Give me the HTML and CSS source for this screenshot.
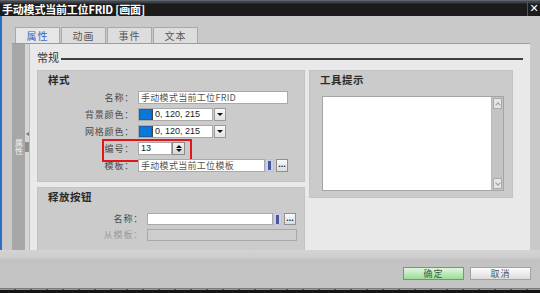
FILE: index.html
```html
<!DOCTYPE html>
<html lang="zh">
<head>
<meta charset="utf-8">
<link rel="stylesheet" href="styles.css">
</head>
<body>
<div class="window">
  <div class="titlebar">
    <span class="title">手动模式当前工位FRID [画面]</span>
    <span class="close">✕</span>
  </div>
  <div class="main">
    <div class="tabs">
      <div class="tab active">属性</div>
      <div class="tab">动画</div>
      <div class="tab">事件</div>
      <div class="tab">文本</div>
    </div>
    <div class="tabbody">
      <div class="sidebar"><span class="vtext">属性</span></div>
      <div class="sidegrip"><span class="grip-arrow"></span><span class="grip-block"></span></div>
      <div class="content">
        <div class="section-head"><span class="section-title">常规</span><span class="rule"></span></div>
        <div class="cols">
          <div class="leftcol">
            <div class="panel style-panel">
              <div class="panel-title">样式</div>
              <div class="form">
                <div class="label">名称：</div>
                <div class="field"><div class="input w150">手动模式当前工位FRID</div></div>

                <div class="label">背景颜色：</div>
                <div class="field">
                  <div class="input w74 color"><span class="swatch"></span><span class="num">0, 120, 215</span></div>
                  <div class="dropbtn"><span class="tri-down"></span></div>
                </div>

                <div class="label">网格颜色：</div>
                <div class="field">
                  <div class="input w74 color"><span class="swatch"></span><span class="num">0, 120, 215</span></div>
                  <div class="dropbtn"><span class="tri-down"></span></div>
                </div>

                <div class="label">编号：</div>
                <div class="field highlight">
                  <div class="input w34"><span class="num">13</span></div>
                  <div class="spin"><span class="tri-up small"></span><span class="tri-down small"></span></div>
                </div>

                <div class="label">模板：</div>
                <div class="field">
                  <div class="input w127">手动模式当前工位模板</div>
                  <div class="listicon"><span></span></div>
                  <div class="dots">...</div>
                </div>
              </div>
            </div>
            <div class="panel release-panel">
              <div class="panel-title">释放按钮</div>
              <div class="form form-release">
                <div class="label">名称：</div>
                <div class="field">
                  <div class="input w126"></div>
                  <div class="listicon"><span></span></div>
                  <div class="dots">...</div>
                </div>
                <div class="label disabled">从模板：</div>
                <div class="field"><div class="input w150 off"></div></div>
              </div>
            </div>
          </div>
          <div class="panel tip-panel">
            <div class="panel-title">工具提示</div>
            <div class="textarea">
              <div class="scrollbar">
                <div class="sbtn"><span class="chev up"></span></div>
                <div class="strack"></div>
                <div class="sbtn"><span class="chev down"></span></div>
              </div>
            </div>
          </div>
        </div>
      </div>
    </div>
  </div>
  <div class="buttonbar">
    <div class="btn ok">确定</div>
    <div class="btn cancel">取消</div>
  </div>
  <div class="bottomstrip"></div>
</div>
</body>
</html>
```

FILE: styles.css
```css
* { box-sizing: border-box; margin: 0; padding: 0; }
html, body { width: 540px; height: 293px; overflow: hidden; }
body {
  font-family: "Noto Sans CJK SC", "Noto Sans", sans-serif;
  font-size: 9px;
  color: #333;
  background: #c8c8c8;
}
.window { display: flex; flex-direction: column; height: 293px; }

.titlebar {
  height: 16px; flex: none;
  background: linear-gradient(#6d7f96 0, #4a4a4a 1px, #3a3a3a 3px, #1c1c1c 4px, #1b1b1b 100%);
  display: flex; align-items: flex-start; justify-content: space-between;
  color: #fff;
}
.title { font-size: 11px; font-weight: bold; line-height: 12px; padding: 3px 0 0 2px; letter-spacing: -0.2px; }
.close {
  width: 13px; height: 16px; border-left: 1px solid #555;
  font-size: 11px; font-weight: bold; line-height: 12px; padding-top: 3px; text-align: center;
  font-family: "DejaVu Sans", sans-serif;
}

.main {
  height: 234px; flex: none;
  border-left: 2px solid #2a6fc8;
  background: #c9c9c9;
  padding: 11px 10px 0 10px;
  display: flex; flex-direction: column;
}
.tabs { display: flex; gap: 1px; height: 16px; padding-left: 3px; flex: none; }
.tab {
  width: 45px; height: 16px;
  border: 1px solid #a9a9a9; border-bottom: none;
  background: #dddddd;
  font-size: 10px; line-height: 15px; text-align: center; color: #555; letter-spacing: 1px;
}
.tab.active { background: #e6e6e6; color: #3b63c9; }

.tabbody {
  flex: 1; display: flex;
  border-top: 1px solid #9c9c9c;
  background: #e9e9e9;
  overflow: hidden;
}
.sidebar {
  width: 13px; flex: none; background: #a7a7a7;
  display: flex; align-items: center; justify-content: center;
}
.vtext { writing-mode: vertical-rl; color: #f2f2f2; font-size: 8px; line-height: 10px; }
.sidegrip {
  width: 5px; flex: none; background: #d6d6d6; border-right: 1px solid #bdbdbd;
  display: flex; flex-direction: column; align-items: center; justify-content: center; gap: 6px;
}
.grip-arrow { width: 0; height: 0; border-top: 2px solid transparent; border-bottom: 2px solid transparent; border-right: 3px solid #777; margin-top: -10px; }
.grip-block { width: 4px; height: 10px; background: #8e8e8e; }

.content { flex: 1; padding: 7px 17px 0 7px; display: flex; flex-direction: column; overflow: hidden; }
.section-head { display: flex; align-items: center; height: 13px; flex: none; }
.section-title { font-size: 11px; line-height: 13px; color: #333; }
.rule { flex: 1; height: 2px; background: #3e3e3e; margin: 2px -10px 0 2px; }

.cols { display: flex; gap: 4px; margin-top: 6px; flex: none; }
.leftcol { width: 268px; display: flex; flex-direction: column; gap: 5px; }
.panel { background: #cbcbcb; border: 1px solid #c3c3c3; }
.panel-title { font-size: 10.5px; font-weight: bold; line-height: 12px; color: #2a2a2a; padding-left: 10px; letter-spacing: 0.5px; }

.style-panel { height: 112px; padding-top: 3px; }
.form {
  display: grid; grid-template-columns: 96px auto; column-gap: 4px; row-gap: 4px;
  grid-auto-rows: 13px; margin-top: 5px; justify-content: start;
}
.label { text-align: right; font-size: 9px; line-height: 13px; color: #4a4a4a; letter-spacing: 0.8px; }
.label.disabled { color: #9a9a9a; }
.field { display: flex; align-items: stretch; gap: 0; position: relative; }
.input {
  height: 13px; background: #fff; border: 1px solid #a9a9a9;
  font-size: 9px; line-height: 11px; padding-left: 2px; color: #555;
  white-space: nowrap; overflow: hidden; letter-spacing: 0.3px;
  display: flex; align-items: center;
}
.input.off { background: #cdcdcd; border-color: #a8a8a8; }
.w150 { width: 150px; }
.w127 { width: 127px; }
.w126 { width: 126px; }
.w74 { width: 75px; }
.w34 { width: 34px; }
.num { font-family: "Liberation Sans", "Noto Sans", sans-serif; font-size: 9px; color: #222; letter-spacing: 0; }
.color { padding-left: 0; }
.swatch { width: 14px; height: 11px; background: #0a78d8; border-right: 1px solid #444; margin-right: 2px; flex: none; box-shadow: inset 0 0 0 1px #1b5fae; }
.dropbtn {
  width: 12px; height: 13px; margin-left: 1px;
  background: linear-gradient(#fafafa, #e2e2e2); border: 1px solid #9a9a9a;
  display: flex; align-items: center; justify-content: center;
}
.tri-down { width: 0; height: 0; border-left: 3px solid transparent; border-right: 3px solid transparent; border-top: 3px solid #111; }
.tri-up { width: 0; height: 0; border-left: 3px solid transparent; border-right: 3px solid transparent; border-bottom: 3px solid #111; }
.spin {
  width: 13px; height: 13px; background: linear-gradient(#f0f0f0, #d6d6d6); border: 1px solid #8c8c8c;
  display: flex; flex-direction: column; align-items: center; justify-content: center; gap: 1px;
}
.highlight::after {
  content: ""; position: absolute; left: -36px; top: -3px; width: 86px; height: 19px;
  border: 2px solid #e3141b;
}
.listicon {
  width: 9px; height: 13px; background: #c9cfee; border: 1px solid #b9c0e0;
  display: flex; justify-content: center; align-items: center;
}
.listicon span { width: 3px; height: 9px; background: #4d5797; }
.dots {
  width: 12px; height: 13px; margin-left: 2px;
  background: linear-gradient(#fafafa, #dcdcdc); border: 1px solid #8f8f8f;
  font-family: "Liberation Sans", sans-serif; font-weight: bold; font-size: 9px; line-height: 8px; text-align: center; color: #222;
}

.release-panel { height: 80px; padding-top: 3px; flex: none; }
.form-release { grid-template-columns: 105px auto; margin-top: 10px; grid-auto-rows: 12px; }
.form-release .input, .form-release .listicon, .form-release .dots { height: 12px; }
.form-release .label { line-height: 12px; }
.form-release .input.off { width: 150px; }

.tip-panel { width: 204px; height: 128px; padding: 3px 8px 8px 0; }
.tip-panel .panel-title { padding-left: 10px; }
.textarea {
  margin: 10px 0 0 12px; width: 182px; height: 95px;
  background: #fff; border: 1px solid #a5a5a5;
  display: flex; justify-content: flex-end;
}
.scrollbar { width: 12px; background: #c4c4c4; border-left: 1px solid #b8b8b8; display: flex; flex-direction: column; padding: 1px 0; }
.sbtn { height: 11px; margin: 0 1px; background: #e6e6e6; border: 1px solid #aaa; display: flex; align-items: center; justify-content: center; }
.strack { flex: 1; }
.chev { width: 4px; height: 4px; border-left: 1px solid #999; border-top: 1px solid #999; }
.chev.up { transform: rotate(45deg); margin-top: 2px; }
.chev.down { transform: rotate(225deg); margin-top: -2px; }

.buttonbar {
  height: 38px; flex: none;
  background: linear-gradient(#d3d3d3 0, #cdcdcd 8px, #c3c3c3 9px, #c3c3c3 100%);
  display: flex; justify-content: flex-end; align-items: flex-start;
  padding: 17px 9px 0 0; gap: 6px;
}
.btn {
  width: 61px; height: 13px; font-size: 9px; line-height: 11px; text-align: center; letter-spacing: 1px;
}
.ok { background: linear-gradient(#e2f6de, #9bdc96); border: 1px solid #55ad52; color: #3c5a3a; }
.cancel { background: linear-gradient(#fdfdfd, #dcdcdc); border: 1px solid #a2a2a2; color: #555; }
.bottomstrip {
  height: 5px; flex: none;
  background: repeating-linear-gradient(90deg, #9a9a9a 0 14px, #5a5a5a 14px 16px) top / 100% 1px no-repeat, #141414;
  border-top: 1px solid #7c7c7c;
}
```
